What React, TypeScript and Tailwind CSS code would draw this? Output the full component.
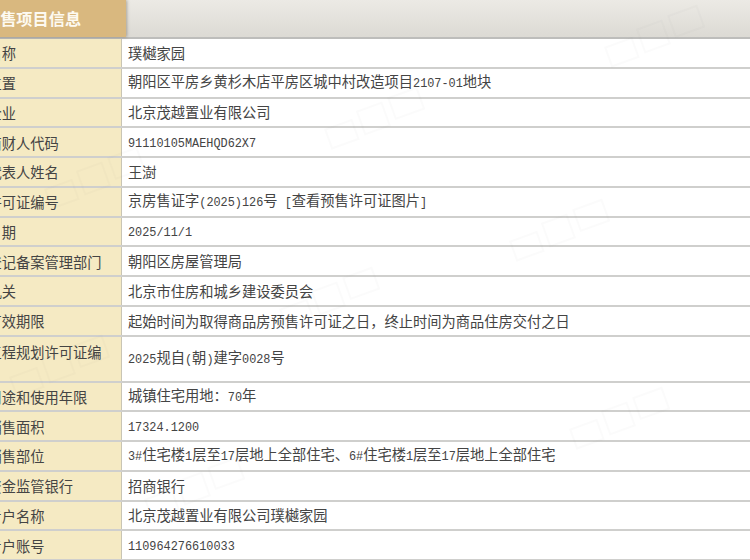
const rows = [
  { label: "项目名称", value: "璞樾家园" },
  { label: "坐落位置", value: "朝阳区平房乡黄杉木店平房区城中村改造项目2107-01地块" },
  { label: "开发企业", value: "北京茂越置业有限公司" },
  { label: "开发商财人代码", value: "91110105MAEHQD62X7" },
  { label: "法定代表人姓名", value: "王澍" },
  { label: "预售许可证编号", value: "京房售证字(2025)126号 [查看预售许可证图片]" },
  { label: "发证日期", value: "2025/11/1" },
  { label: "合同登记备案管理部门", value: "朝阳区房屋管理局" },
  { label: "发证机关", value: "北京市住房和城乡建设委员会" },
  { label: "证书有效期限", value: "起始时间为取得商品房预售许可证之日，终止时间为商品住房交付之日" },
  { label: "建设工程规划许可证编号", value: "2025规自(朝)建字0028号", tall: true },
  { label: "土地用途和使用年限", value: "城镇住宅用地：70年" },
  { label: "准许销售面积", value: "17324.1200" },
  { label: "准许销售部位", value: "3#住宅楼1层至17层地上全部住宅、6#住宅楼1层至17层地上全部住宅" },
  { label: "预售资金监管银行", value: "招商银行" },
  { label: "监管专户名称", value: "北京茂越置业有限公司璞樾家园" },
  { label: "监管专户账号", value: "110964276610033" },
];

// where the faint site watermark repeats over the table
const marks = [
  [655, 38],
  [375, 120],
  [95, 180],
  [560, 232],
  [60, 368],
  [330, 300],
  [195, 490],
  [620, 420],
];

// latin runs are half width next to the cjk glyphs, like the original bitmap font
const Mixed = ({ text }: { text: string }) => (
  <span>
    {text.split(/([\x20-\x7e]+)/).map((part, i) =>
      /^[\x20-\x7e]+$/.test(part) ? (
        <span key={i} className="font-['Liberation_Mono',monospace] text-[11.875px]">
          {part}
        </span>
      ) : (
        <span key={i}>{part}</span>
      )
    )}
  </span>
);

export default function App() {
  return (
    <div className="relative h-[560px] w-[750px] overflow-hidden bg-white font-['Noto_Sans_CJK_SC','Noto_Sans',sans-serif] text-[14.25px] text-[#444444]">
      <div className="-ml-[41px] w-[791px]">
        <div className="flex h-[39px] border-b-2 border-[#bdbdbb] bg-gradient-to-b from-[#eceae5] to-[#dcdad4]">
          <div className="flex w-[167px] items-center bg-[#d9b87f] pl-[25px] text-[16.2px] leading-none font-bold text-[#fdfaf2] shadow-[1px_0_3px_rgba(90,80,60,0.45)]">
            预售项目信息
          </div>
        </div>
        {rows.map((row) => (
          <div
            key={row.label}
            className={`flex border-b-2 border-[#cfcfcd] ${row.tall ? "h-[46px]" : "h-[29.75px]"}`}
          >
            <div className="flex w-[163px] shrink-0 items-center border-r border-[#c9c5b4] bg-[#f5eac3] pr-[14px] leading-[15px]">
              <span>{row.label}</span>
            </div>
            <div className="flex flex-1 items-center whitespace-pre pl-[6px] leading-none">
              <Mixed text={row.value} />
            </div>
          </div>
        ))}
      </div>
      <svg className="pointer-events-none absolute inset-0" width="750" height="560" fill="none">
        {marks.map(([x, y]) => (
          <g key={`${x}-${y}`} transform={`translate(${x} ${y}) rotate(-20)`} stroke="#8a8a80" strokeOpacity="0.03" strokeWidth="2">
            <rect x="-50" y="-8" width="28" height="20" />
            <rect x="-14" y="-14" width="26" height="24" />
            <rect x="20" y="-16" width="30" height="22" />
          </g>
        ))}
      </svg>
    </div>
  );
}
